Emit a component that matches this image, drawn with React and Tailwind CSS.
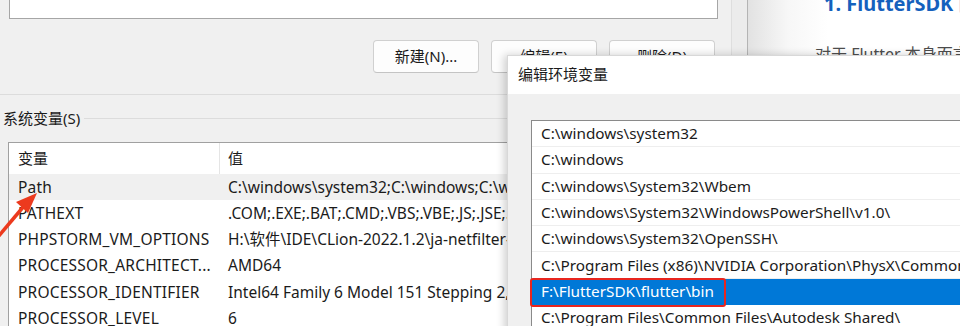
import React from 'react'

const font = { fontFamily: '"Noto Sans", "Noto Sans CJK SC", sans-serif' }

const sysVars = [
    ['Path', 'C:\\windows\\system32;C:\\windows;C:\\windows\\System32\\Wbem;C:\\windows\\System32'],
    ['PATHEXT', '.COM;.EXE;.BAT;.CMD;.VBS;.VBE;.JS;.JSE;.WSF;.WSH;.MSC'],
    ['PHPSTORM_VM_OPTIONS', 'H:\\软件\\IDE\\CLion-2022.1.2\\ja-netfilter-all\\vmoptions'],
    ['PROCESSOR_ARCHITECT...', 'AMD64'],
    ['PROCESSOR_IDENTIFIER', 'Intel64 Family 6 Model 151 Stepping 2, GenuineIntel'],
    ['PROCESSOR_LEVEL', '6'],
]

const paths = [
    'C:\\windows\\system32',
    'C:\\windows',
    'C:\\windows\\System32\\Wbem',
    'C:\\windows\\System32\\WindowsPowerShell\\v1.0\\',
    'C:\\windows\\System32\\OpenSSH\\',
    'C:\\Program Files (x86)\\NVIDIA Corporation\\PhysX\\Common',
    'F:\\FlutterSDK\\flutter\\bin',
    'C:\\Program Files\\Common Files\\Autodesk Shared\\',
]

function Button({ label }){
    return <div className="w-[106px] h-[33px] flex items-center justify-center rounded-[4px] border border-[#d0d0d0] border-b-[#c4c4c4] bg-[#fdfdfd] text-[15px] text-[#1b1b1b]">{label}</div>
}

function BackWindow(){
    return (
        <div className="w-[731px] h-full overflow-hidden bg-[#f0f0f0]">
            <div className="ml-[9px] w-[709px] h-[19px] bg-white border-x border-b border-[#a6a6a6]"></div>
            <div className="mt-[21px] flex justify-end gap-[12px] pr-[16px]">
                <Button label="新建(N)..." />
                <Button label="编辑(E)" />
                <Button label="删除(D)" />
            </div>
            <div className="mt-[21px] h-px bg-[#dcdcdc]"></div>
            <div className="mt-[13px] flex items-center gap-[4px] pl-[3px] h-[20px]">
                <span className="text-[15px] text-[#1b1b1b] leading-none">系统变量(S)</span>
                <div className="flex-1 h-px bg-[#dcdcdc]"></div>
            </div>
            <div className="mt-[14px] ml-[8px] h-[200px] bg-white border-l border-t border-[#a0a0a0]">
                <div className="flex h-[31px] items-center text-[15px] text-[#1b1b1b]">
                    <div className="w-[211px] shrink-0 pl-[9px] h-full flex items-center border-r border-[#e5e5e5]">变量</div>
                    <div className="pl-[8px]">值</div>
                </div>
                {sysVars.map(([k, v], i) => (
                    <div key={k} className={`flex h-[26.3px] items-center text-[15.5px] text-[#1b1b1b] whitespace-nowrap ${i === 0 ? 'bg-[#f0f0f0]' : ''}`}>
                        <div className="w-[211px] shrink-0 pl-[9px] tracking-[0.2px]">{k}</div>
                        <div className="pl-[8px]">{v}</div>
                    </div>
                ))}
            </div>
        </div>
    )
}

function Page(){
    return (
        <div className="flex-1 h-full bg-[linear-gradient(to_right,#e2e2e2,#f7f7f7_40px,#ffffff_80px)] overflow-hidden">
            <div className="ml-[76px] -mt-[6px] text-[20px] leading-[20px] font-bold text-[#1561bd] whitespace-nowrap">1. FlutterSDK 的配置</div>
            <div className="ml-[67px] mt-[30px] text-[16px] leading-[20px] text-[#4d4d4d] whitespace-nowrap">对于 Flutter 本身而言</div>
        </div>
    )
}

function EditDialog(){
    return (
        <div className="absolute left-[507px] top-[55px] w-[460px] h-[280px] bg-[#f0f0f0] shadow-[-3px_0_8px_rgba(0,0,0,0.18)] border-l border-t border-[#d8d8d8] flex flex-col">
            <div className="h-[38px] shrink-0 bg-white flex items-center pl-[10px] pb-[2px] text-[15px] text-[#1b1b1b]">编辑环境变量</div>
            <div className="mt-[26px] ml-[23px] flex-1 bg-white border-l border-t border-[#8a8a8a]">
                {paths.map((p, i) => (
                    <div key={p} className={`h-[26.3px] flex items-center pl-[9px] text-[15.3px] whitespace-nowrap border-b ${i === 6 ? 'bg-[#0078d7] text-white border-[#0078d7]' : 'text-[#1b1b1b] border-[#eeeeee]'}`}>{p}</div>
                ))}
            </div>
        </div>
    )
}

export default function App(){
    return (
        <div className="relative w-[960px] h-[326px] overflow-hidden bg-white" style={font}>
            <div className="flex h-full">
                <BackWindow />
                <div className="w-[17px] h-full bg-[#ececec] border-l border-[#dedede] border-r border-r-[#b4b4b4]"></div>
                <Page />
            </div>
            <EditDialog />
            <div className="absolute left-[530px] top-[278px] w-[196px] h-[29px] border-2 border-[#e8261f] rounded-[3px]"></div>
            <svg className="absolute left-0 top-[180px]" width="50" height="70" viewBox="0 0 50 70">
                <line x1="-3" y1="58" x2="24" y2="26" stroke="#ec3a1e" strokeWidth="3.5" />
                <polygon points="37,13 16,22 28,33" fill="#ec3a1e" />
            </svg>
        </div>
    )
}
